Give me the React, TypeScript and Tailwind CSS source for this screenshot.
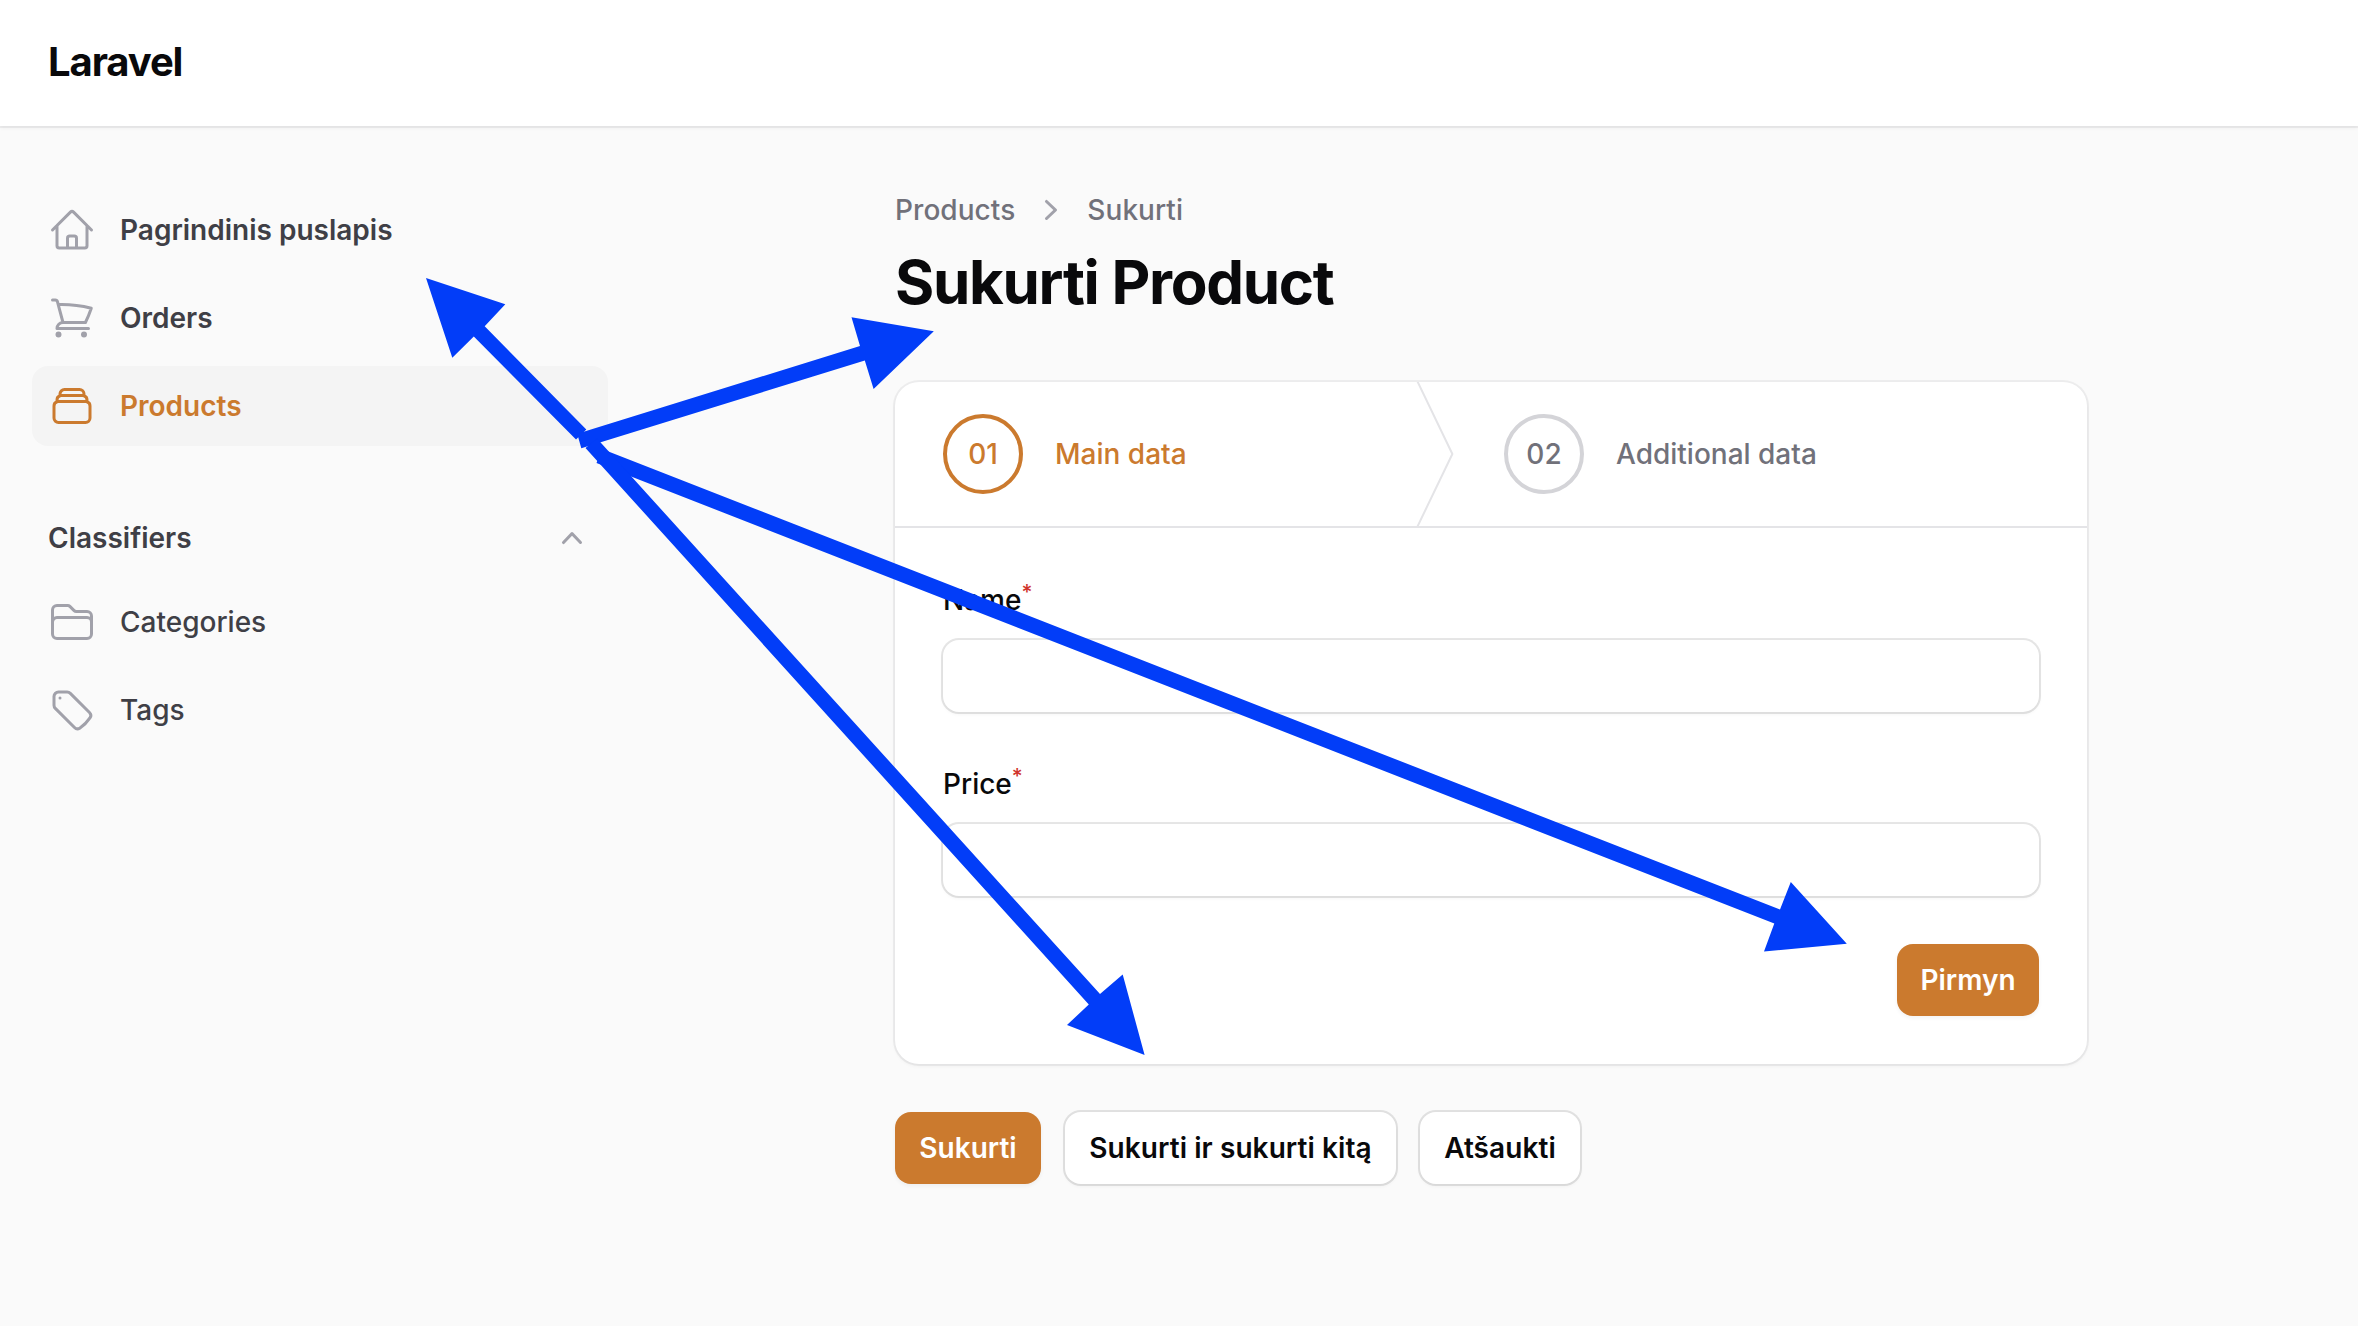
import type { ReactNode } from 'react';

const ORANGE_BTN =
  'flex h-[72px] items-center justify-center rounded-2xl bg-[#cb7a2e] text-[28px] font-semibold text-white shadow-[0_2px_4px_rgba(0,0,0,0.05)]';
const WHITE_BTN =
  'flex h-[72px] items-center justify-center rounded-2xl bg-white text-[28px] tracking-[0.08px] font-semibold text-[#09090b] ring-2 ring-[#09090b]/10 shadow-[0_2px_4px_rgba(0,0,0,0.05)]';

function Icon({ children }: { children: ReactNode }) {
  return (
    <svg
      className="size-12 shrink-0"
      viewBox="0 0 24 24"
      fill="none"
      stroke="currentColor"
      strokeWidth={1.5}
      strokeLinecap="round"
      strokeLinejoin="round"
    >
      {children}
    </svg>
  );
}

const home = (
  <path d="m2.25 12 8.954-8.955c.44-.439 1.152-.439 1.591 0L21.75 12M4.5 9.75v10.125c0 .621.504 1.125 1.125 1.125H9.75v-4.875c0-.621.504-1.125 1.125-1.125h2.25c.621 0 1.125.504 1.125 1.125V21h4.125c.621 0 1.125-.504 1.125-1.125V9.75M8.25 21h8.25" />
);
const cart = (
  <path d="M2.25 3h1.386c.51 0 .955.343 1.087.835l.383 1.437M7.5 14.25a3 3 0 0 0-3 3h15.75m-12.75-3h11.218c1.121-2.3 2.1-4.684 2.924-7.138a60.114 60.114 0 0 0-16.536-1.84M7.5 14.25 5.106 5.272M6 20.25a.75.75 0 1 1-1.5 0 .75.75 0 0 1 1.5 0Zm12.75 0a.75.75 0 1 1-1.5 0 .75.75 0 0 1 1.5 0Z" />
);
const stack = (
  <path d="M6 6.878V6a2.25 2.25 0 0 1 2.25-2.25h7.5A2.25 2.25 0 0 1 18 6v.878m-12 0c.235-.083.487-.128.75-.128h10.5c.263 0 .515.045.75.128m-12 0A2.25 2.25 0 0 0 4.5 9v.878m13.5-3A2.25 2.25 0 0 1 19.5 9v.878m0 0a2.246 2.246 0 0 0-.75-.128H5.25c-.263 0-.515.045-.75.128m15 0A2.25 2.25 0 0 1 21 12v6a2.25 2.25 0 0 1-2.25 2.25H5.25A2.25 2.25 0 0 1 3 18v-6c0-.98.626-1.813 1.5-2.122" />
);
const folder = (
  <path d="M2.25 12.75V12A2.25 2.25 0 0 1 4.5 9.75h15A2.25 2.25 0 0 1 21.75 12v.75m-8.69-6.44-2.12-2.12a1.5 1.5 0 0 0-1.061-.44H4.5A2.25 2.25 0 0 0 2.25 6v12a2.25 2.25 0 0 0 2.25 2.25h15A2.25 2.25 0 0 0 21.75 18V9a2.25 2.25 0 0 0-2.25-2.25h-5.379a1.5 1.5 0 0 1-1.06-.44Z" />
);
const tag = (
  <>
    <path d="M9.568 3H5.25A2.25 2.25 0 0 0 3 5.25v4.318c0 .597.237 1.17.659 1.591l9.581 9.581c.699.699 1.78.872 2.607.33a18.095 18.095 0 0 0 5.223-5.223c.542-.827.369-1.908-.33-2.607L11.16 3.66A2.25 2.25 0 0 0 9.568 3Z" />
    <path d="M6 6h.008v.008H6V6Z" />
  </>
);

function NavItem({ icon, label, active, nested }: { icon: ReactNode; label: string; active?: boolean; nested?: boolean }) {
  return (
    <a className={`flex h-20 items-center gap-6 rounded-2xl px-4 ${active ? 'bg-[#f4f4f4] text-[#cb7a2e]' : 'text-[#a1a1aa]'}`}>
      <Icon>{icon}</Icon>
      <span className={`text-[28px] ${nested ? 'font-medium' : 'font-semibold'} ${active ? '' : 'text-[#3f3f46]'}`}>{label}</span>
    </a>
  );
}

function Step({ num, label, active }: { num: string; label: string; active?: boolean }) {
  return (
    <div className="flex h-full items-center gap-8 px-12 text-[28px] font-medium">
      <div
        className={`flex size-20 items-center justify-center rounded-full border-4 ${
          active ? 'border-[#cb7a2e] text-[#cb7a2e]' : 'border-[#d4d4d8] text-[#71717a]'
        }`}
      >
        {num}
      </div>
      <span className={active ? 'text-[#cb7a2e]' : 'text-[#71717a]'}>{label}</span>
    </div>
  );
}

function Field({ label }: { label: string }) {
  return (
    <label className="flex flex-col gap-4">
      <span className="h-12 text-[28px] leading-[48px] font-medium text-[#09090b]">
        {label}
        <sup className="text-[21px] leading-none font-medium text-[#d0342c]">*</sup>
      </span>
      <input className="h-[72px] w-full rounded-2xl bg-white px-6 text-[32px] ring-2 ring-[#09090b]/10 shadow-[0_2px_4px_rgba(0,0,0,0.05)] outline-none" />
    </label>
  );
}

/* Annotation arrows drawn over the page */
function Arrows() {
  return (
    <svg className="pointer-events-none absolute inset-0" width="2358" height="1326" viewBox="0 0 2358 1326" fill="#023df8">
      <polygon points="426,278 505.3,304.3 484.7,326.3 586.3,429.6 576,439.5 473.8,336.5 452.3,357.8" />
      <polygon points="933.8,331.2 873.6,389 864.8,360.4 581.3,448.3 577.2,433.8 860,346 851.5,317.3" />
      <polygon points="1846.8,943.8 1764,951.5 1774.3,923.5 596.5,463 602,449 1780,909.5 1790.8,882" />
      <polygon points="1144.6,1055 1067,1025 1088.8,1004.5 585.5,448 597,438.5 1100,994 1122.7,974.5" />
    </svg>
  );
}

export default function App() {
  return (
    <div className="relative flex h-[1326px] w-[2358px] flex-col overflow-hidden bg-[#fafafa] font-['Inter',sans-serif]">
      <header className="flex h-[126px] shrink-0 items-center bg-white px-12 pb-0.5 ring-2 ring-[#09090b]/5 shadow-[0_2px_4px_rgba(0,0,0,0.05)]">
        <span className="text-[40px] leading-[40px] font-bold tracking-[-1.1px] text-[#09090b]">Laravel</span>
      </header>

      <div className="flex flex-1">
        <nav className="flex w-[640px] shrink-0 flex-col gap-14 px-8 pt-16">
          <div className="flex flex-col gap-2">
            <NavItem icon={home} label="Pagrindinis puslapis" />
            <NavItem icon={cart} label="Orders" />
            <NavItem icon={stack} label="Products" active />
          </div>
          <div className="flex w-[576px] flex-col gap-2">
            <div className="flex h-[72px] items-center justify-between px-4">
              <span className="text-[28px] font-semibold text-[#3f3f46]">Classifiers</span>
              <svg className="size-10 text-[#a1a1aa]" viewBox="0 0 20 20" fill="currentColor">
                <path fillRule="evenodd" clipRule="evenodd" d="M14.77 12.79a.75.75 0 01-1.06-.02L10 8.832 6.29 12.77a.75.75 0 11-1.08-1.04l4.25-4.5a.75.75 0 011.08 0l4.25 4.5a.75.75 0 01-.02 1.06z" />
              </svg>
            </div>
            <NavItem icon={folder} label="Categories" nested />
            <NavItem icon={tag} label="Tags" nested />
          </div>
        </nav>

        <main className="ml-[255px] flex w-[1192px] flex-col pt-16">
          <div className="flex h-10 items-center gap-4 text-[28px] tracking-[0.06px] font-medium text-[#71717a]">
            <span>Products</span>
            <svg className="size-10 text-[#a1a1aa]" viewBox="0 0 20 20" fill="currentColor">
              <path fillRule="evenodd" clipRule="evenodd" d="M7.21 14.77a.75.75 0 01.02-1.06L11.168 10 7.23 6.29a.75.75 0 111.04-1.08l4.5 4.25a.75.75 0 010 1.08l-4.5 4.25a.75.75 0 01-1.06-.02z" />
            </svg>
            <span>Sukurti</span>
          </div>
          <h1 className="mt-4 text-[60px] leading-[72px] font-bold tracking-[-1.3px] text-[#09090b]">Sukurti Product</h1>

          <section className="mt-16 rounded-3xl bg-white ring-2 ring-[#09090b]/5 shadow-[0_2px_4px_rgba(0,0,0,0.05)]">
            <div className="flex h-[146px] border-b-2 border-[#e4e4e7]">
              <div className="flex w-[561px] justify-between">
                <Step num="01" label="Main data" active />
                <svg className="h-full w-10 text-[#e4e4e7]" viewBox="0 0 22 80" fill="none" preserveAspectRatio="none">
                  <path d="M0 -2L20 40L0 82" stroke="currentColor" strokeLinejoin="round" vectorEffect="non-scaling-stroke" strokeWidth={2} />
                </svg>
              </div>
              <Step num="02" label="Additional data" />
            </div>
            <div className="flex flex-col gap-12 p-12">
              <Field label="Name" />
              <Field label="Price" />
              <div className="flex justify-end">
                <button className={`${ORANGE_BTN} w-[142px]`}>Pirmyn</button>
              </div>
            </div>
          </section>

          <div className="mt-12 flex gap-6">
            <button className={`${ORANGE_BTN} w-[146px]`}>Sukurti</button>
            <button className={`${WHITE_BTN} w-[331px]`}>Sukurti ir sukurti kitą</button>
            <button className={`${WHITE_BTN} w-40`}>Atšaukti</button>
          </div>
        </main>
      </div>
      <Arrows />
    </div>
  );
}
